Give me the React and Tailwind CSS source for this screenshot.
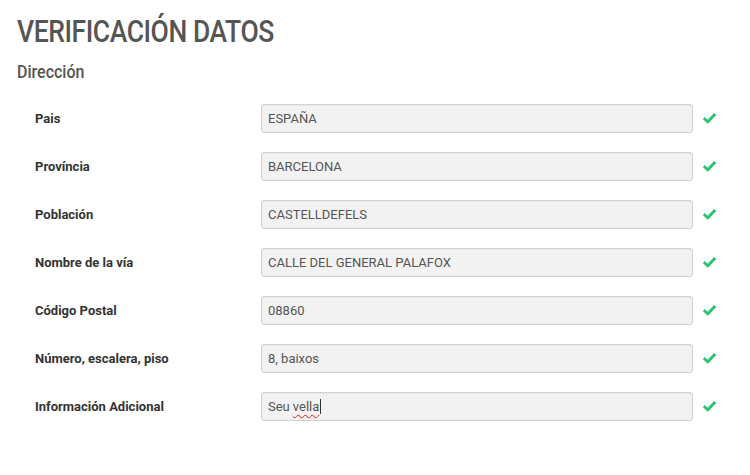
import React from 'react';

const rows = [
    { label: 'Pais', value: 'ESPAÑA' },
    { label: 'Província', value: 'BARCELONA' },
    { label: 'Población', value: 'CASTELLDEFELS' },
    { label: 'Nombre de la vía', value: 'CALLE DEL GENERAL PALAFOX' },
    { label: 'Código Postal', value: '08860' },
    { label: 'Número, escalera, piso', value: '8, baixos' },
    { label: 'Información Adicional', value: 'Seu vella', typing: true },
];

const Check = () => (
    <svg width="13" height="11" viewBox="0 0 13 11" className="shrink-0">
        <path d="M1.8 6 L4.8 8.8 L11.2 2" fill="none" stroke="#27c26c" strokeWidth="2.8" strokeLinecap="square" />
    </svg>
);

const App = () => {
    return (
        <div className="w-[750px] h-[475px] bg-white pl-[17px] pt-[13px] font-['Roboto',sans-serif] overflow-hidden">
            <h1 className="inline-block origin-left scale-x-[0.855] text-[31px] leading-[38px] font-medium text-[#555555] tracking-[-0.5px] whitespace-nowrap">
                VERIFICACIÓN DATOS
            </h1>
            <div>
                <h2 className="inline-block origin-left scale-x-[0.89] mt-[9px] text-[18px] leading-[24px] font-medium text-[#555555]">
                    Dirección
                </h2>
            </div>

            <div className="mt-[19px] flex flex-col gap-[19px]">
                {rows.map((row) => (
                    <div key={row.label} className="flex items-center">
                        <label className="w-[244px] pl-[18px] shrink-0 text-[13px] font-bold text-[#333333]">
                            {row.label}
                        </label>
                        <div className="w-[432px] h-[29px] flex items-center px-[6px] bg-[#f2f2f2] border border-[#d2d2d2] rounded-[3px] text-[13px] text-[#555555] shadow-[inset_0_1px_1px_rgba(0,0,0,0.04)]">
                            {row.typing ? (
                                <span className="flex items-center">
                                    Seu{' '}
                                    <span className="ml-[3px] underline decoration-wavy decoration-[#e02020] decoration-1 underline-offset-[3px]">vella</span>
                                    <span className="w-px h-[15px] bg-[#333333] ml-px" />
                                </span>
                            ) : (
                                row.value
                            )}
                        </div>
                        <div className="ml-[10px]">
                            <Check />
                        </div>
                    </div>
                ))}
            </div>
        </div>
    );
};

export default App;
